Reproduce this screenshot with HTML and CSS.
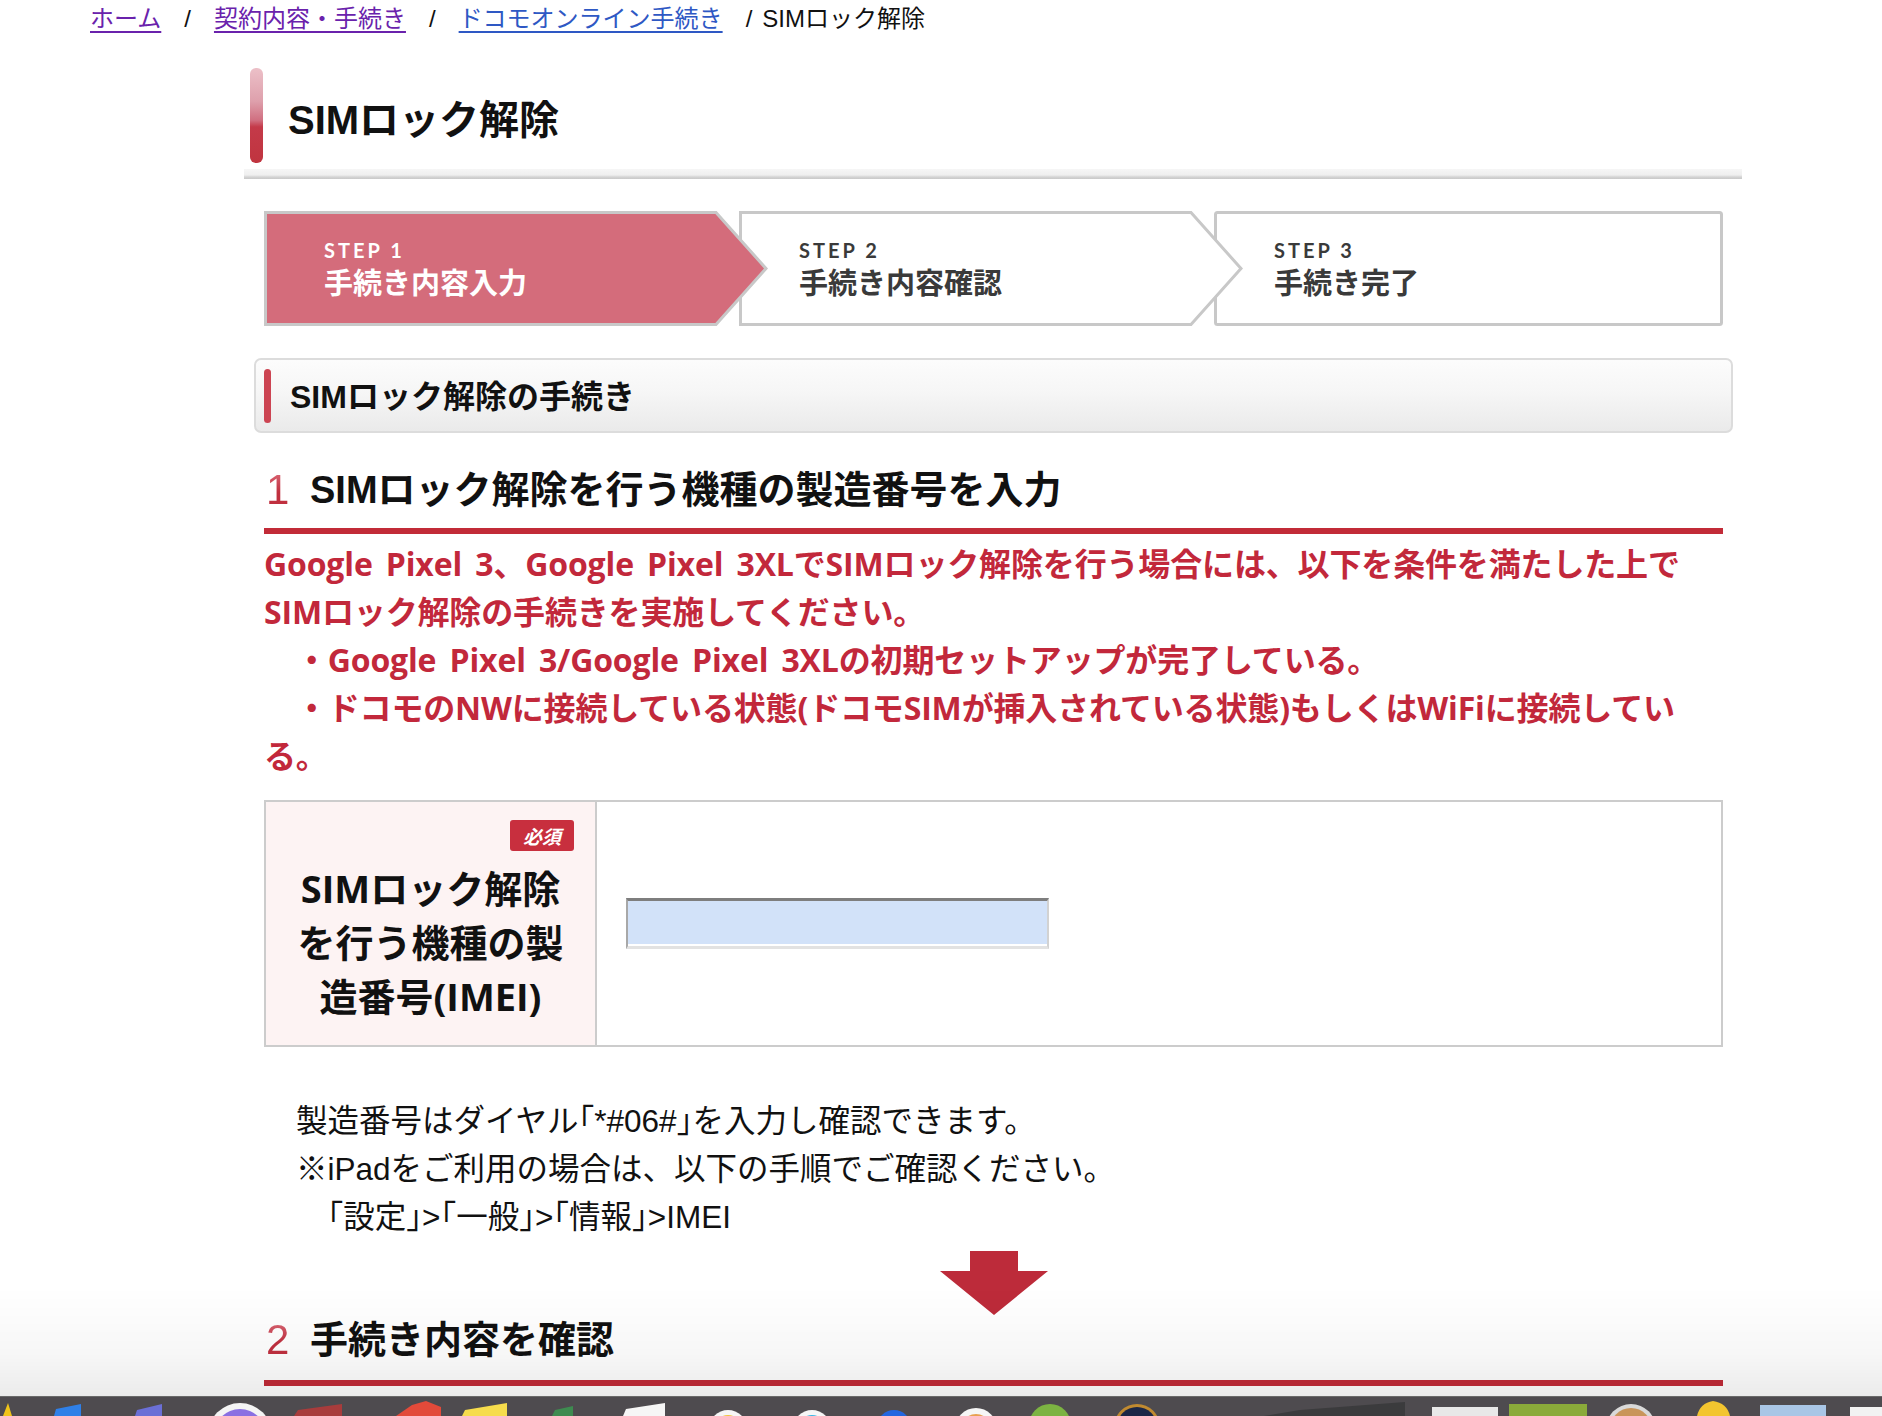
FILE: index.html
```html
<!DOCTYPE html>
<html lang="ja">
<head>
<meta charset="utf-8">
<title>SIMロック解除</title>
<link rel="stylesheet" href="styles.css">
</head>
<body>
<nav class="breadcrumb">
  <a class="crumb visited" href="#">ホーム</a><span class="sep">/</span><a class="crumb visited" href="#">契約内容・手続き</a><span class="sep">/</span><a class="crumb" href="#">ドコモオンライン手続き</a><span class="sep last">/</span><span class="current">SIMロック解除</span>
</nav>

<main class="main">
  <header class="page-title">
    <span class="title-bar"></span>
    <h1>SIMロック解除</h1>
  </header>
  <div class="title-rule"></div>

  <div class="content">
    <ol class="steps">
      <li class="step step-current">
        <svg class="step-bg" width="504" height="115" viewBox="0 0 504 115"><polygon points="1.5,1.5 452,1.5 502,57.5 452,113.5 1.5,113.5" fill="#d46c7b" stroke="#c8c8c8" stroke-width="3"/></svg>
        <span class="step-no">STEP 1</span>
        <span class="step-name">手続き内容入力</span>
      </li>
      <li class="step step-mid">
        <svg class="step-bg" width="504" height="115" viewBox="0 0 504 115"><polygon points="1.5,1.5 452,1.5 502,57.5 452,113.5 1.5,113.5" fill="#ffffff" stroke="#c8c8c8" stroke-width="3"/></svg>
        <span class="step-no">STEP 2</span>
        <span class="step-name">手続き内容確認</span>
      </li>
      <li class="step step-last">
        <svg class="step-bg" width="509" height="115" viewBox="0 0 509 115"><rect x="1.5" y="1.5" width="506" height="112" rx="2" fill="#ffffff" stroke="#c8c8c8" stroke-width="3"/></svg>
        <span class="step-no">STEP 3</span>
        <span class="step-name">手続き完了</span>
      </li>
    </ol>

    <div class="section-box">
      <span class="section-bar"></span>
      <h2>SIMロック解除の手続き</h2>
    </div>

    <h3 class="num-heading"><span class="num">1</span>SIMロック解除を行う機種の製造番号を入力</h3>

    <p class="notice">Google Pixel 3、Google Pixel 3XLでSIMロック解除を行う場合には、以下を条件を満たした上で<br>SIMロック解除の手続きを実施してください。<br>　・Google Pixel 3/Google Pixel 3XLの初期セットアップが完了している。<br>　・ドコモのNWに接続している状態(ドコモSIMが挿入されている状態)もしくはWiFiに接続してい<br>る。</p>

    <div class="form-row">
      <div class="form-label">
        <span class="badge">必須</span>
        <span class="label-text">SIMロック解除<br>を行う機種の製<br>造番号(IMEI)</span>
      </div>
      <div class="form-field">
        <input class="imei-input" type="text" aria-label="製造番号(IMEI)">
      </div>
    </div>

    <div class="help">
      <p>製造番号はダイヤル｢*#06#｣を入力し確認できます。</p>
      <p>※iPadをご利用の場合は、以下の手順でご確認ください。</p>
      <p>　｢設定｣&gt;｢一般｣&gt;｢情報｣&gt;IMEI</p>
    </div>

    <div class="down-arrow">
      <svg width="108" height="64" viewBox="0 0 108 64"><path d="M30 0 H78 V20 H108 L54 64 L0 20 H30 Z" fill="#bd2b3a"/></svg>
    </div>

    <h3 class="num-heading"><span class="num">2</span>手続き内容を確認</h3>
  </div>
</main>

<div class="screen-fade"></div>
<div class="dock">
  <svg width="1882" height="19" viewBox="0 0 1882 19">
    <polygon points="3,19 8,6 12,19" fill="#f0c419"/>
    <polygon points="54,19 56,12 81,7 81,19" fill="#2f80e8"/>
    <polygon points="135,19 137,13 162,7 162,19" fill="#6b6fd6"/>
    <circle cx="240" cy="38" r="32" fill="#f4f4f4"/>
    <circle cx="240" cy="38" r="26" fill="#8a70e2"/>
    <polygon points="294,19 298,13 342,7 342,19" fill="#a83c3c"/>
    <polygon points="396,19 412,8 426,4 441,10 441,19" fill="#e24a3a"/>
    <polygon points="462,19 465,13 507,6 507,19" fill="#f6dc4c"/>
    <polygon points="552,19 555,13 573,9 573,19" fill="#3e8b50"/>
    <polygon points="623,19 626,12 665,6 665,19" fill="#f6f6f6"/>
    <circle cx="728" cy="32" r="19" fill="#f6f6f6"/>
    <circle cx="728" cy="32" r="14" fill="#f2c43a"/>
    <circle cx="812" cy="32" r="19" fill="#f6f6f6"/>
    <circle cx="812" cy="32" r="14" fill="#36b6e6"/>
    <circle cx="894" cy="30" r="17" fill="#2266e0"/>
    <circle cx="976" cy="32" r="21" fill="#f6f6f6"/>
    <circle cx="976" cy="32" r="15" fill="#e8a050"/>
    <circle cx="1050" cy="28" r="21" fill="#7cb342"/>
    <circle cx="1137" cy="30" r="23" fill="#c08a30"/>
    <circle cx="1137" cy="30" r="20" fill="#1b2747"/>
    <polygon points="1264,19 1300,13 1405,5 1405,19" fill="#3b3b3d"/>
    <rect x="1432" y="10" width="66" height="9" fill="#e8e8e8"/>
    <rect x="1509" y="7" width="78" height="12" fill="#8aaa3a"/>
    <circle cx="1631" cy="32" r="25" fill="#d9d9d9"/>
    <circle cx="1631" cy="32" r="21" fill="#c9955a"/>
    <path d="M1697 19 Q1700 6 1713 4 Q1727 6 1730 19 Z" fill="#f3c52f"/>
    <rect x="1760" y="8" width="66" height="11" fill="#a9c6e6"/>
    <rect x="1850" y="10" width="32" height="9" fill="#f2f2f2"/>
  </svg>
</div>
</body>
</html>
```

FILE: styles.css
```css
html {
  overflow: hidden;
}

body {
  margin: 0;
  background: #ffffff;
  color: #111111;
  font-family: "Liberation Sans", "Noto Sans CJK JP", sans-serif;
}

/* breadcrumb */
.breadcrumb {
  height: 38px;
  padding-left: 90px;
  font-size: 24px;
  line-height: 38px;
  white-space: nowrap;
}

.crumb {
  color: #2e58c4;
  text-decoration: underline;
  text-decoration-thickness: 2px;
  text-underline-offset: 4px;
}

.crumb.visited {
  color: #6a22ac;
}

.sep {
  margin: 0 23px;
  color: #111111;
}

.sep.last {
  margin-right: 10px;
}

.current {
  color: #111111;
}

/* page title */
.main {
  width: 1498px;
  margin-left: 244px;
}

.page-title {
  display: flex;
  align-items: center;
  margin-top: 30px;
  padding-left: 6px;
}

.title-bar {
  width: 13px;
  height: 95px;
  border-radius: 6px;
  background: linear-gradient(#ecc0c8 0%, #dea0ac 35%, #d06f80 55%, #c43a49 62%, #c0343f 100%);
}

.page-title h1 {
  margin: 8px 0 0 25px;
  font-size: 40px;
  font-weight: 700;
  line-height: 50px;
  color: #111111;
}

.title-rule {
  height: 10px;
  margin-top: 6px;
  background: linear-gradient(#f6f6f6 0%, #efefef 60%, #d4d4d4 80%, #c9c9c9 100%);
}

.content {
  padding: 0 19px 0 20px;
}

/* steps */
.steps {
  display: flex;
  margin: 32px 0 0;
  padding: 0;
  list-style: none;
}

.step {
  position: relative;
  display: flex;
  flex-direction: column;
  box-sizing: border-box;
  width: 504px;
  height: 115px;
  padding: 26px 0 0 60px;
  color: #3a3a3a;
}

.step-bg {
  position: absolute;
  top: 0;
  left: 0;
}

.step-current {
  z-index: 3;
  color: #ffffff;
}

.step-mid {
  z-index: 2;
  margin-left: -29px;
}

.step-last {
  z-index: 1;
  width: 509px;
  margin-left: -29px;
}

.step-no,
.step-name {
  position: relative;
}

.step-no {
  font-family: "Lato", "Liberation Sans", sans-serif;
  font-size: 20px;
  font-weight: 700;
  letter-spacing: 3px;
  line-height: 26px;
}

.step-name {
  font-family: "Noto Sans CJK JP", sans-serif;
  font-size: 29px;
  font-weight: 700;
  line-height: 36px;
}

/* section header */
.section-box {
  display: flex;
  align-items: center;
  box-sizing: border-box;
  height: 75px;
  margin: 32px -10px 0;
  padding-left: 8px;
  border: 2px solid #dcdcdc;
  border-radius: 7px;
  background: linear-gradient(#fcfcfc 0%, #f6f6f6 45%, #eaeaea 100%);
}

.section-bar {
  width: 7px;
  height: 54px;
  border-radius: 4px;
  background: #cc4452;
}

.section-box h2 {
  margin: 3px 0 0 19px;
  font-size: 32px;
  font-weight: 700;
  line-height: 40px;
  color: #111111;
}

/* numbered headings */
.num-heading {
  display: flex;
  align-items: center;
  margin: 32px 0 0;
  padding-bottom: 13px;
  border-bottom: 6px solid #c22b38;
  font-size: 38px;
  font-weight: 700;
  line-height: 50px;
  color: #111111;
}

.num {
  width: 46px;
  padding-left: 2px;
  box-sizing: border-box;
  font-family: "Liberation Sans", sans-serif;
  font-size: 42px;
  font-weight: 400;
  background: linear-gradient(#e27886 0%, #c0303f 55%);
  -webkit-background-clip: text;
  background-clip: text;
  color: transparent;
}

/* notice */
.notice {
  margin: 6px 0 0;
  font-family: "Open Sans", "Noto Sans CJK JP", sans-serif;
  font-size: 32px;
  font-weight: 700;
  line-height: 48px;
  letter-spacing: -0.15px;
  word-spacing: 5px;
  color: #c2283b;
}

/* form */
.form-row {
  display: grid;
  grid-template-columns: 331px 1fr;
  margin-top: 20px;
  border: 2px solid #cccccc;
}

.form-label {
  display: flex;
  flex-direction: column;
  align-items: center;
  padding: 18px 21px 22px 0;
  border-right: 2px solid #cccccc;
  background: #fdf3f3;
}

.badge {
  align-self: flex-end;
  width: 64px;
  height: 31px;
  border-radius: 3px;
  background: #c82f3e;
  color: #ffffff;
  font-family: "Noto Sans CJK JP", sans-serif;
  font-size: 19px;
  font-weight: 700;
  font-style: italic;
  line-height: 31px;
  text-align: center;
}

.label-text {
  margin-top: 10px;
  padding-left: 21px;
  font-family: "Open Sans", "Noto Sans CJK JP", sans-serif;
  font-size: 38px;
  font-weight: 700;
  line-height: 54px;
  text-align: center;
  color: #111111;
}

.form-field {
  display: flex;
  align-items: center;
  padding-left: 29px;
}

.imei-input {
  box-sizing: border-box;
  width: 423px;
  height: 51px;
  margin: 0;
  padding: 0 8px;
  border-top: 3px solid #7e7e7e;
  border-left: 2px solid #a8a8a8;
  border-right: 2px solid #d2d2d2;
  border-bottom: 3px solid #e2e2e2;
  background: #d2e2f9;
  box-shadow: inset 0 -2px 0 #ffffff;
  font-size: 24px;
}

/* help */
.help {
  margin-top: 50px;
  padding-left: 32px;
  font-family: "Liberation Sans", "Noto Sans CJK JP", sans-serif;
  font-size: 31.5px;
  line-height: 48px;
  color: #111111;
}

.help p {
  margin: 0;
}

.down-arrow {
  display: flex;
  justify-content: center;
  margin-top: 10px;
}

.down-arrow svg {
  display: block;
}

.down-arrow + .num-heading {
  margin-top: 0;
  padding-bottom: 15px;
}

/* screen overlay (desktop) */
.screen-fade {
  position: fixed;
  left: 0;
  right: 0;
  bottom: 19px;
  height: 110px;
  background: linear-gradient(rgba(0, 0, 0, 0) 0%, rgba(0, 0, 0, 0.03) 60%, rgba(0, 0, 0, 0.08) 100%);
  pointer-events: none;
}

.dock {
  position: fixed;
  left: 0;
  right: 0;
  bottom: 0;
  height: 19px;
  background: #4e4b4f;
  border-top: 1px solid #6a6a6a;
  overflow: hidden;
}

.dock svg {
  display: block;
}
```
